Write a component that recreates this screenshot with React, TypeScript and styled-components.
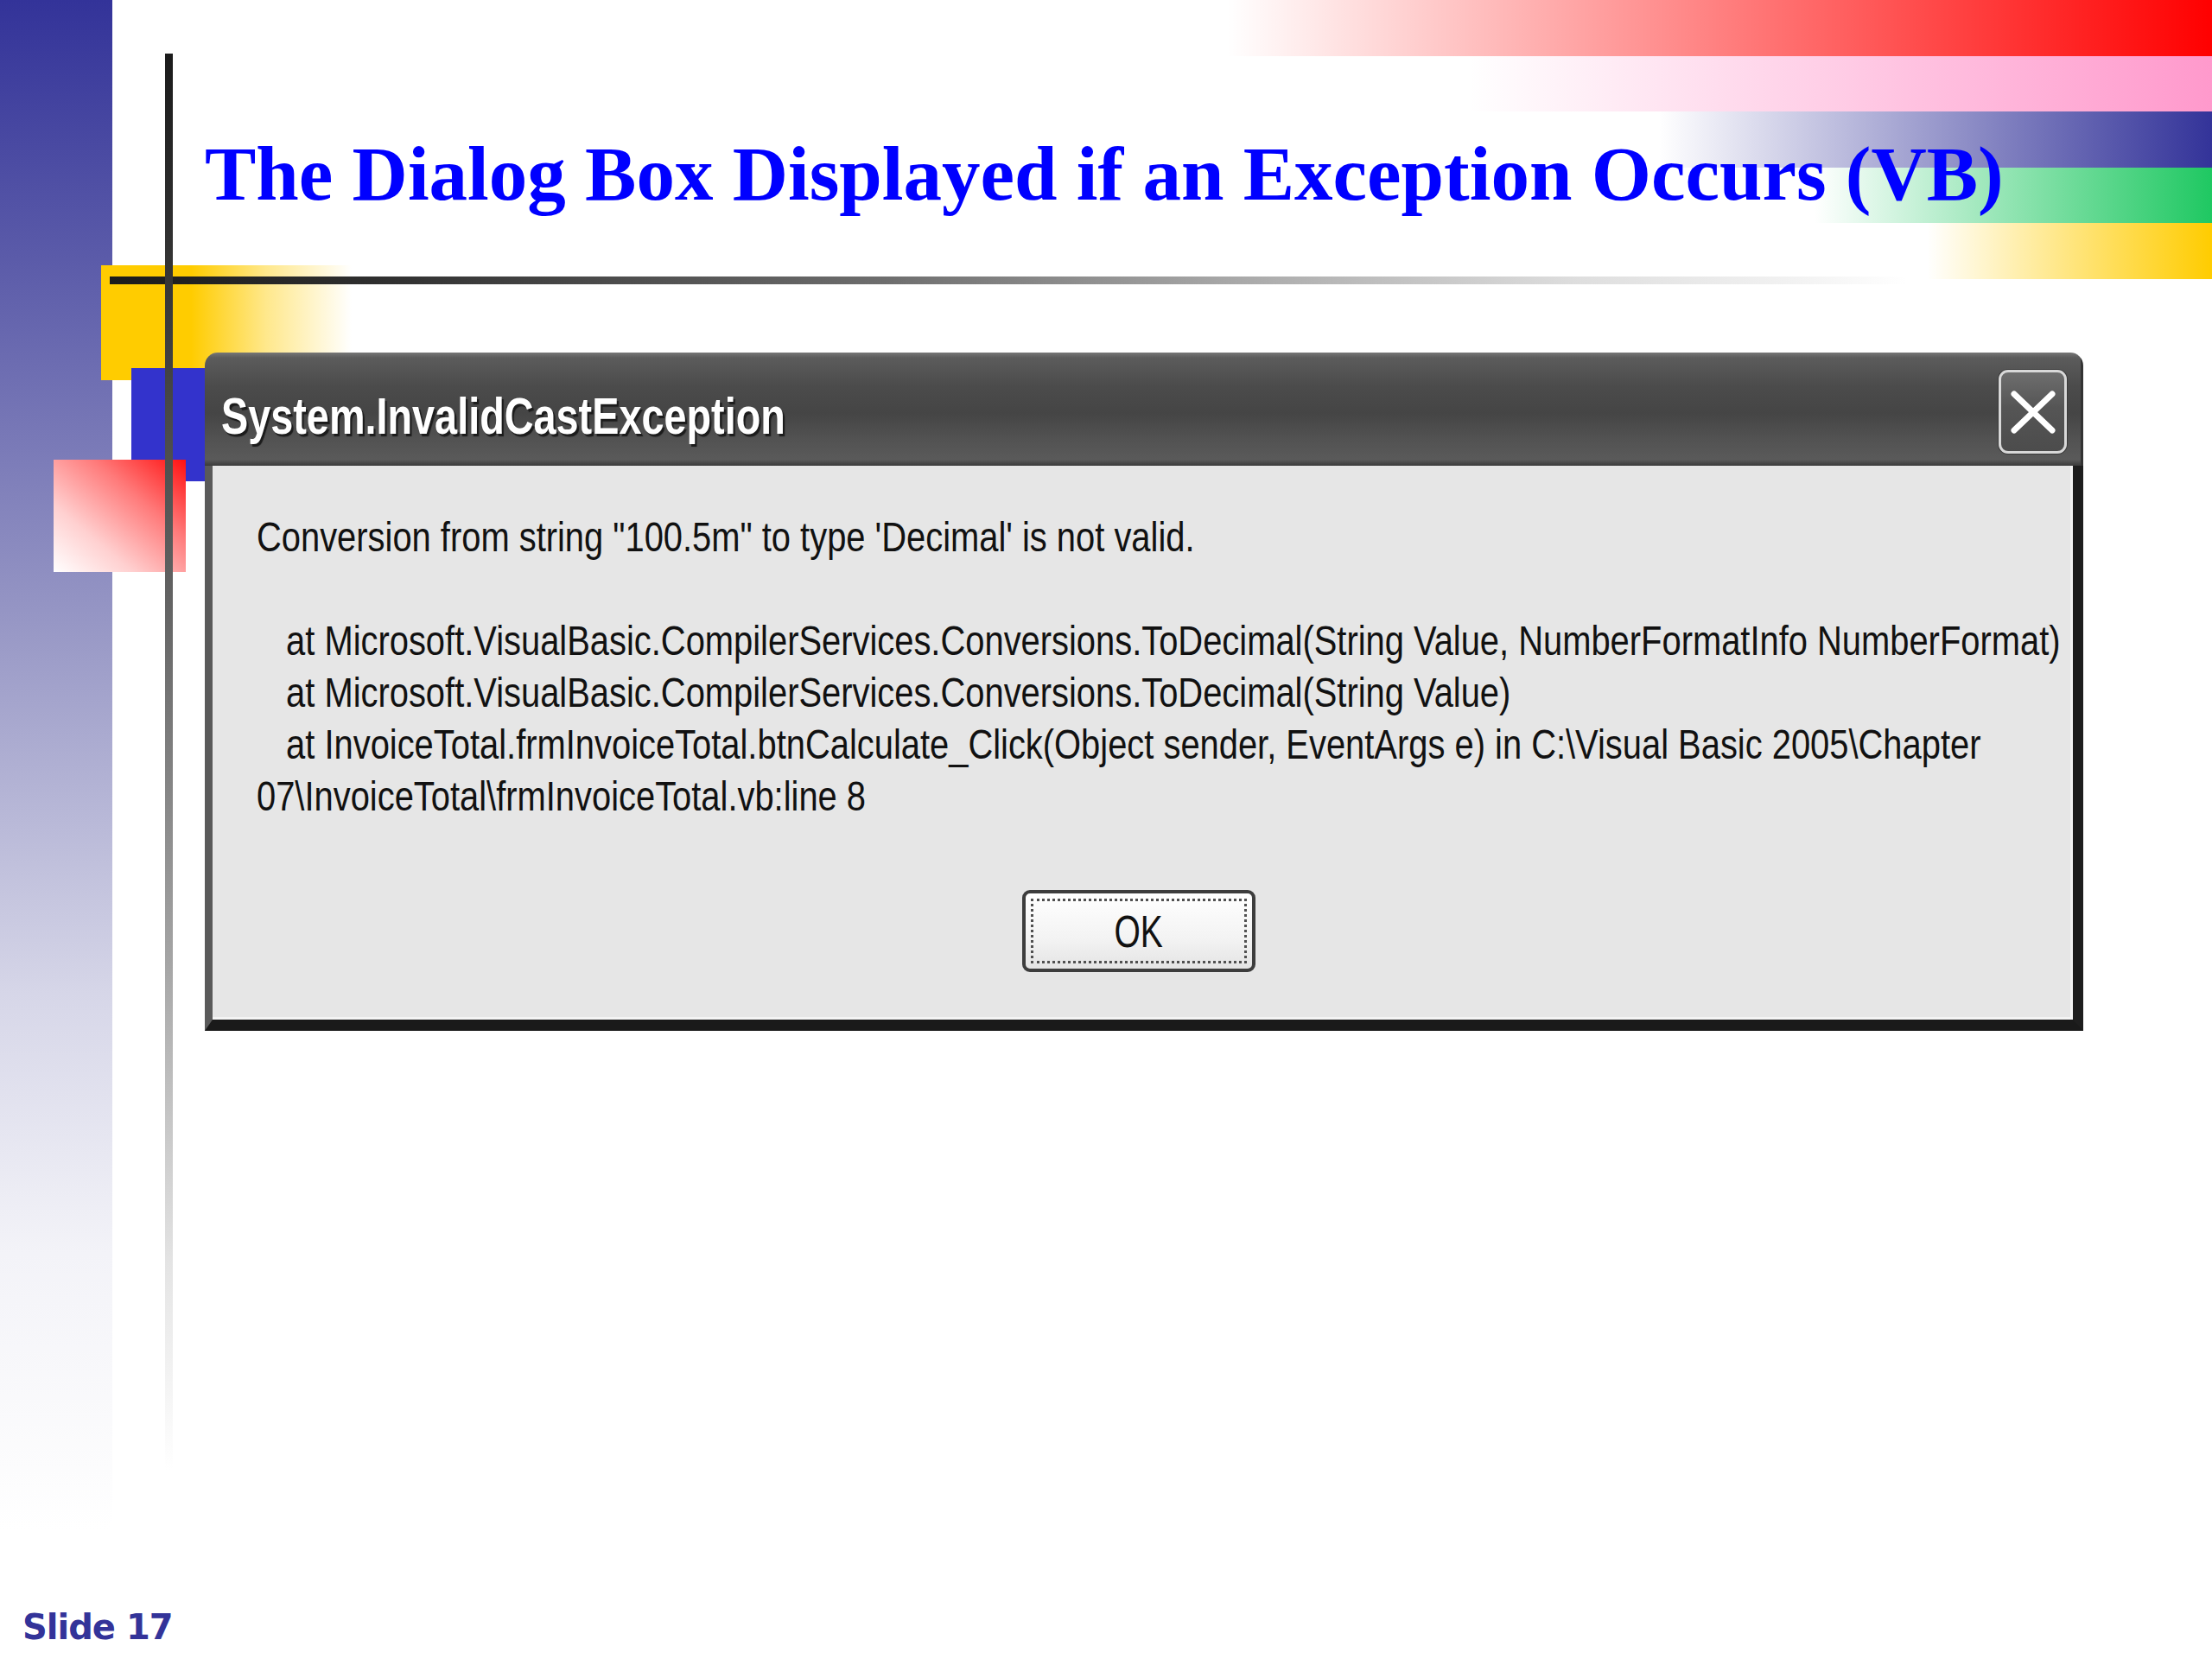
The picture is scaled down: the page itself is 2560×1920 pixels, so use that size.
import styled, { createGlobalStyle } from 'styled-components'

const GlobalStyle = createGlobalStyle`
    html, body {
        margin: 0;
        padding: 0;
        background: #ffffff;
    }
`

const dialogFont = `"Liberation Sans", Arial, sans-serif`

const Slide = styled.div`
    position: relative;
    width: 2560px;
    height: 1920px;
    overflow: hidden;
    background: #ffffff;
    display: flex;
    flex-direction: column;
    padding: 157px 0 17px;
    box-sizing: border-box;
`

// template decoration
const LeftBand = styled.div`
    position: absolute;
    left: 0;
    top: 0;
    width: 130px;
    height: 1770px;
    background: linear-gradient(#333399 0px, #5b5ba9 300px, #9797c5 720px, #d6d6e8 1150px, #f3f3f8 1450px, #fcfcfd 1700px, #ffffff 1770px);
`

const Stripes = styled.div`
    position: absolute;
    top: 0;
    right: 0;
    width: 1160px;
    height: 323px;
    display: flex;
    flex-direction: column;
`

const Stripe = styled.div<{ $color: string; $from: number }>`
    flex: 1;
    background: linear-gradient(to right, rgba(255, 255, 255, 0) ${(p) => p.$from}px, ${(p) => p.$color} 100%);
`

const YellowBlock = styled.div`
    position: absolute;
    left: 117px;
    top: 307px;
    width: 290px;
    height: 133px;
    background: linear-gradient(to right, #ffcc00 0%, #ffcc00 36%, rgba(255, 204, 0, 0.45) 66%, rgba(255, 255, 255, 0) 100%);
`

const BlueBlock = styled.div`
    position: absolute;
    left: 152px;
    top: 426px;
    width: 100px;
    height: 131px;
    background: #3333cc;
`

const RedBlock = styled.div`
    position: absolute;
    left: 62px;
    top: 532px;
    width: 153px;
    height: 130px;
    background: linear-gradient(to bottom left, #ff1111 0%, #ff7a7a 35%, #ffd0d0 70%, #ffffff 100%);
`

const HRule = styled.div`
    position: absolute;
    left: 127px;
    top: 320px;
    width: 2080px;
    height: 9px;
    background: linear-gradient(to right, #1b1b1b 0px, #2e2e2e 300px, #6e6e6e 900px, #a8a8a8 1300px, #dedede 1700px, #f2f2f2 1950px, rgba(255, 255, 255, 0) 2080px);
`

const VRule = styled.div`
    position: absolute;
    left: 191px;
    top: 62px;
    width: 9px;
    height: 1640px;
    background: linear-gradient(#1b1b1b 0px, #3a3a3a 300px, #646464 640px, #a5a5a5 1050px, #e4e4e4 1400px, #ffffff 1640px);
`

const Title = styled.h1`
    position: relative;
    z-index: 2;
    margin: 0 0 0 237px;
    font-family: "Liberation Serif", "Times New Roman", serif;
    font-weight: bold;
    font-size: 89px;
    line-height: 1;
    color: #0000ff;
    white-space: nowrap;
`

const Dialog = styled.div`
    position: relative;
    z-index: 2;
    margin: 162px 0 0 237px;
    width: 2174px;
    border-radius: 15px 15px 0 0;
    overflow: hidden;
    display: flex;
    flex-direction: column;
`

const TitleBar = styled.div`
    height: 131px;
    box-sizing: border-box;
    display: flex;
    align-items: center;
    padding: 0 16px 0 19px;
    background: linear-gradient(#777777 0px, #5c5c5c 6px, #4b4b4b 40px, #454545 70px, #525252 100px, #5a5a5a 124px, #3a3a3a 131px);
    border-right: 3px solid #333333;
`

const TitleText = styled.span`
    font-family: ${dialogFont};
    font-weight: bold;
    font-size: 60px;
    color: #ffffff;
    text-shadow: 3px 3px 1px #1c1c1c;
    white-space: nowrap;
    transform: scaleX(0.78);
    transform-origin: left center;
    margin-top: 15px;
`

const CloseButton = styled.button`
    margin-left: auto;
    margin-top: 6px;
    width: 79px;
    height: 97px;
    box-sizing: border-box;
    padding: 0;
    display: flex;
    align-items: center;
    justify-content: center;
    border: 3px solid #d8d8d8;
    border-radius: 11px;
    background: linear-gradient(#6e6e6e, #555555 45%, #4c4c4c);
    box-shadow: 0 0 0 1px #3a3a3a;
`

const Body = styled.div`
    background: #e6e6e6;
    border-left: 9px solid #5a5a5a;
    border-right: 12px solid #1e1e1e;
    border-bottom: 13px solid #1a1a1a;
    box-shadow: inset -3px -3px 0 #f4f4f4;
    padding: 53px 60px 55px 51px;
    display: flex;
    flex-direction: column;
`

const Message = styled.div`
    font-family: ${dialogFont};
    font-size: 48px;
    line-height: 60px;
    color: #111111;
    transform: scaleX(0.831);
    transform-origin: left top;
`

const Line = styled.div<{ $indent?: boolean }>`
    white-space: pre;
    min-height: 60px;
    padding-left: ${(p) => (p.$indent ? '41px' : '0')};
`

const ButtonRow = styled.div`
    display: flex;
    justify-content: center;
    margin-top: 78px;
`

const OkButton = styled.button`
    width: 270px;
    height: 95px;
    box-sizing: border-box;
    padding: 6px;
    border: 4px solid #3d3d3d;
    border-radius: 9px;
    background: linear-gradient(#ffffff, #f3f3f3 60%, #e4e4e4);
    display: flex;
`

const FocusRing = styled.span`
    flex: 1;
    display: flex;
    align-items: center;
    justify-content: center;
    border: 3px dotted #505050;
`

const OkLabel = styled.span`
    font-family: ${dialogFont};
    font-size: 52px;
    color: #111111;
    transform: scaleX(0.75);
`

const Footer = styled.div`
    position: relative;
    z-index: 2;
    margin: auto 0 0 26px;
    font-family: "DejaVu Sans", Verdana, sans-serif;
    font-weight: bold;
    font-size: 40px;
    letter-spacing: -1px;
    line-height: 1;
    color: #333399;
`

const stack = [
    { text: 'Conversion from string "100.5m" to type \'Decimal\' is not valid.', indent: false },
    { text: '', indent: false },
    { text: 'at Microsoft.VisualBasic.CompilerServices.Conversions.ToDecimal(String Value, NumberFormatInfo NumberFormat)', indent: true },
    { text: 'at Microsoft.VisualBasic.CompilerServices.Conversions.ToDecimal(String Value)', indent: true },
    { text: 'at InvoiceTotal.frmInvoiceTotal.btnCalculate_Click(Object sender, EventArgs e) in C:\\Visual Basic 2005\\Chapter', indent: true },
    { text: '07\\InvoiceTotal\\frmInvoiceTotal.vb:line 8', indent: false },
]

const stripes = [
    { color: '#ff0000', from: 20 },
    { color: '#ff99cc', from: 300 },
    { color: '#333399', from: 520 },
    { color: '#1fc862', from: 700 },
    { color: '#ffcc00', from: 830 },
]

export default function App() {
    return (
        <>
            <GlobalStyle />
            <Slide>
                <LeftBand />
                <YellowBlock />
                <BlueBlock />
                <RedBlock />
                <HRule />
                <VRule />
                <Stripes>
                    {stripes.map((s) => (
                        <Stripe key={s.color} $color={s.color} $from={s.from} />
                    ))}
                </Stripes>

                <Title>The Dialog Box Displayed if an Exception Occurs (VB)</Title>

                <Dialog>
                    <TitleBar>
                        <TitleText>System.InvalidCastException</TitleText>
                        <CloseButton aria-label="Close">
                            <svg width="56" height="52" viewBox="0 0 56 52">
                                <path d="M6 5 L50 47 M50 5 L6 47" stroke="#ffffff" strokeWidth="7" strokeLinecap="round" fill="none" />
                            </svg>
                        </CloseButton>
                    </TitleBar>
                    <Body>
                        <Message>
                            {stack.map((l, i) => (
                                <Line key={i} $indent={l.indent}>
                                    {l.text}
                                </Line>
                            ))}
                        </Message>
                        <ButtonRow>
                            <OkButton>
                                <FocusRing>
                                    <OkLabel>OK</OkLabel>
                                </FocusRing>
                            </OkButton>
                        </ButtonRow>
                    </Body>
                </Dialog>

                <Footer>Slide 17</Footer>
            </Slide>
        </>
    )
}
